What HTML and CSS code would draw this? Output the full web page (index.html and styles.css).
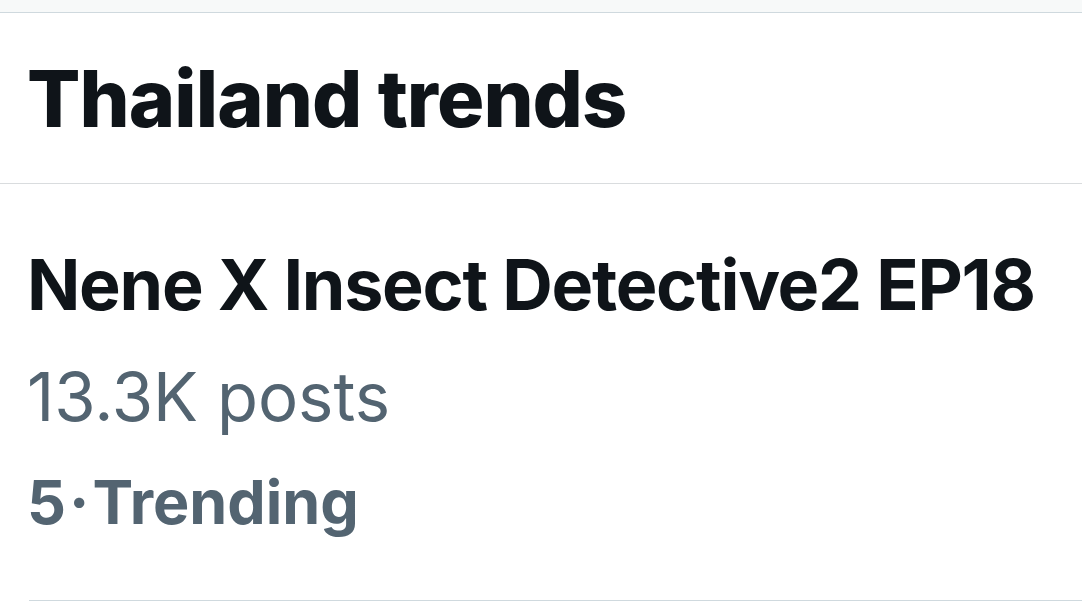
FILE: index.html
```html
<!DOCTYPE html>
<html>
<head>
<meta charset="utf-8">
<link rel="stylesheet" href="styles.css">
</head>
<body>
<div class="page">
  <div class="topstrip"></div>
  <header class="header">
    <h1 class="title">Thailand trends</h1>
  </header>
  <div class="trend">
    <div class="trend-name">Nene X Insect Detective2 EP18</div>
    <div class="trend-count">13.3K posts</div>
    <div class="trend-meta"><span>5</span><span class="dot">·</span><span>Trending</span></div>
  </div>
</div>
</body>
</html>
```
FILE: styles.css
```css
html, body {
  margin: 0;
  padding: 0;
  background: #ffffff;
}
body {
  font-family: Inter, "Noto Sans", sans-serif;
  color: #0f1419;
  width: 1082px;
  height: 609px;
  overflow: hidden;
}
.page {
  display: flex;
  flex-direction: column;
}
.topstrip {
  height: 12px;
  background: #f7f9f9;
  border-bottom: 1px solid #cfd9de;
}
.header {
  height: 170px;
  border-bottom: 1px solid #d9dcde;
  display: flex;
  align-items: center;
  padding: 0 27px;
}
.title {
  margin: 0;
  font-size: 79px;
  font-weight: 800;
  letter-spacing: -0.95px;
  line-height: 1;
}
.trend {
  border-bottom: 1px solid #cfd9de;
  padding: 66px 0 0;
  margin-left: 29px;
  height: 417px;
  box-sizing: border-box;
  display: flex;
  flex-direction: column;
}
.trend-name {
  margin-left: -2px;
  font-size: 70px;
  font-weight: 700;
  line-height: 1;
  letter-spacing: -1.25px;
}
.trend-count {
  margin-left: -2px;
  margin-top: 43px;
  font-size: 67px;
  font-weight: 400;
  color: #536471;
  line-height: 1;
}
.trend-meta {
  margin-left: -2px;
  margin-top: 42px;
  font-size: 61px;
  font-weight: 700;
  color: #536471;
  line-height: 1;
  display: flex;
}
.dot {
  padding: 0 3px;
}
```
